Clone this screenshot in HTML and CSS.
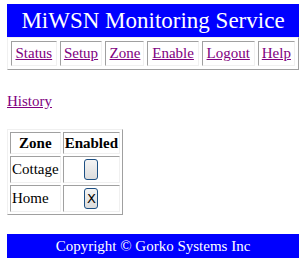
FILE: index.html
```html
<!DOCTYPE html>
<html lang="en">
<head>
    <meta charset="UTF-8">
    <title>MiWSN Monitoring Service</title>
    <link rel="stylesheet" href="styles.css">
</head>
<body>
    <div class="banner">MiWSN Monitoring Service</div>
    <table class="menu">
        <tr>
            <td><a href="#">Status</a></td>
            <td><a href="#">Setup</a></td>
            <td><a href="#">Zone</a></td>
            <td><a href="#">Enable</a></td>
            <td><a href="#">Logout</a></td>
            <td><a href="#">Help</a></td>
        </tr>
    </table>
    <p class="history"><a href="#">History</a></p>
    <table class="zones">
        <tr><th>Zone</th><th>Enabled</th></tr>
        <tr><td>Cottage</td><td class="toggle"><button class="flag"></button></td></tr>
        <tr><td>Home</td><td class="toggle"><button class="flag">X</button></td></tr>
    </table>
    <div class="footer">Copyright &copy; Gorko Systems Inc</div>
</body>
</html>
```

FILE: styles.css
```css
body {
    margin: 4px 7px;
    font-family: "Liberation Serif", serif;
    font-size: 15px;
    color: #000;
}
a {
    color: #800080;
}
.banner {
    background-color: #0000ff;
    color: #fff;
    text-align: center;
    font-size: 23px;
    height: 33px;
    line-height: 33px;
    white-space: nowrap;
}
.menu {
    width: 100%;
    border: 1px solid;
    border-color: #f0f0f0 #a0a0a0 #a0a0a0 #f0f0f0;
    border-spacing: 3px;
    font-size: 15px;
}
.menu td {
    border: 1px solid;
    border-color: #a0a0a0 #f0f0f0 #f0f0f0 #a0a0a0;
    padding: 1px;
    height: 21px;
    text-align: center;
}
.history {
    margin: 23px 0 19px;
}
.zones {
    border: 1px solid;
    border-color: #f0f0f0 #a0a0a0 #a0a0a0 #f0f0f0;
    border-spacing: 2px;
    font-size: 15px;
}
.zones th, .zones td {
    border: 1px solid;
    border-color: #a0a0a0 #f0f0f0 #f0f0f0 #a0a0a0;
    padding: 1px;
}
.zones th {
    height: 18px;
}
.zones td {
    height: 23px;
}
.zones .toggle {
    text-align: center;
}
.flag {
    width: 14px;
    height: 21px;
    padding: 0;
    font-family: "DejaVu Sans", sans-serif;
    font-size: 13px;
    color: #000;
    border: 1px solid #1c4f83;
    border-radius: 3px;
    background: linear-gradient(#f4f4f4, #dcdcdc);
    vertical-align: middle;
}
.footer {
    margin-top: 19px;
    background-color: #0000ff;
    color: #fff;
    text-align: center;
    height: 24px;
    line-height: 24px;
}
```
